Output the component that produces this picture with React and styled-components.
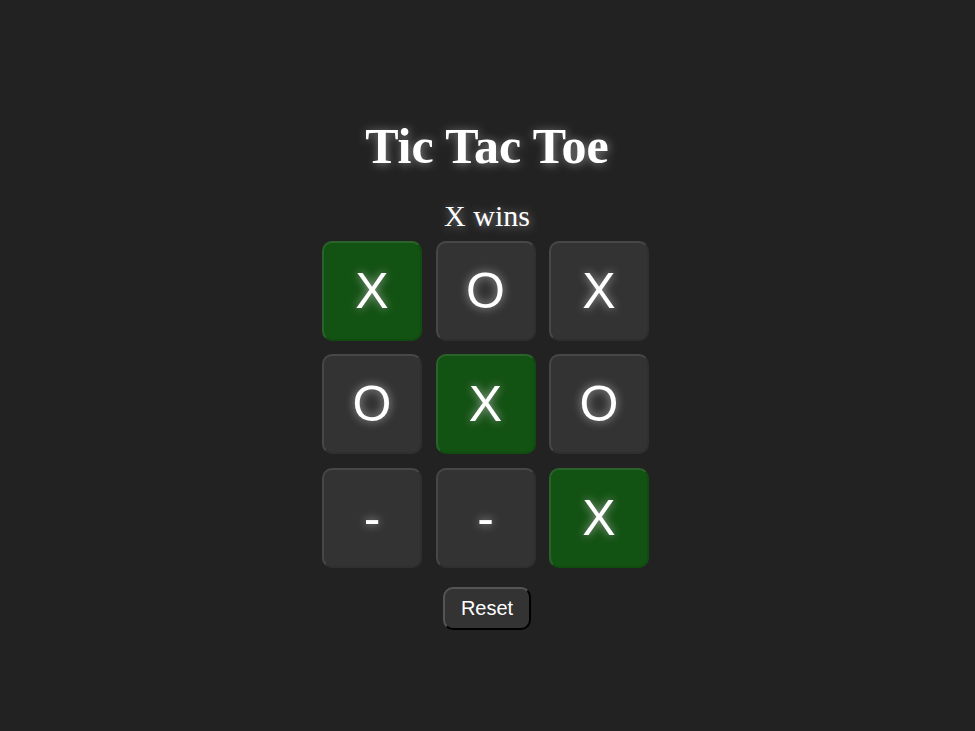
import React, { useState } from "react";
import styled, { createGlobalStyle } from "styled-components";

const GlobalStyle = createGlobalStyle`
  body {
    margin: 0;
    background: #222;
    color: #fff;
    font-family: "Liberation Serif", "Times New Roman", serif;
  }
`;

const Page = styled.main`
  min-height: 100vh;
  box-sizing: border-box;
  padding: 15px 1px 0 0;
  display: flex;
  flex-direction: column;
  align-items: center;
  justify-content: center;
`;

const Title = styled.h1`
  margin: 0 0 24px;
  font-size: 50px;
  line-height: 58px;
  text-shadow: 1px 1px 10px #888;
`;

const Status = styled.p`
  margin: 0 0 8px;
  font-size: 30px;
  line-height: 34px;
  text-shadow: 1px 1px 10px #888;
`;

const Board = styled.div`
  display: grid;
  grid-template-columns: repeat(3, 100px);
  grid-template-rows: repeat(3, 100px);
  place-content: space-between;
  width: 327px;
  height: 327px;
  margin-right: 3px;
`;

const Cell = styled.button`
  padding: 0;
  border: 2px solid;
  border-color: rgba(255, 255, 255, 0.1) rgba(0, 0, 0, 0.08) rgba(0, 0, 0, 0.08) rgba(255, 255, 255, 0.1);
  border-radius: 10px;
  background: ${({ $winning }) => ($winning ? "#125212" : "#333")};
  color: #fff;
  font-family: "Liberation Sans", Arial, sans-serif;
  font-size: 50px;
  text-shadow: 0 0 10px #aaa;
`;

const Reset = styled.button`
  margin-top: 19px;
  padding: 8px 16px;
  border: 2px outset #000;
  border-radius: 10px;
  background: #333;
  color: #fff;
  font-family: "Liberation Sans", Arial, sans-serif;
  font-size: 20px;
  line-height: 23px;
`;

const LINES = [
  [0, 1, 2], [3, 4, 5], [6, 7, 8],
  [0, 3, 6], [1, 4, 7], [2, 5, 8],
  [0, 4, 8], [2, 4, 6],
];

const START = ["X", "O", "X", "O", "X", "O", "-", "-", "X"];

export default function App() {
  const [cells, setCells] = useState(START);
  const line = LINES.find(
    ([a, b, c]) => cells[a] !== "-" && cells[a] === cells[b] && cells[b] === cells[c]
  );
  const moves = cells.filter((mark) => mark !== "-").length;
  const next = moves % 2 === 0 ? "X" : "O";
  const status = line ? `${cells[line[0]]} wins` : moves === 9 ? "Draw" : `${next}'s turn`;

  const play = (index) => {
    if (line || cells[index] !== "-") return;
    setCells(cells.map((mark, i) => (i === index ? next : mark)));
  };

  return (
    <>
      <GlobalStyle />
      <Page>
        <Title>Tic Tac Toe</Title>
        <Status>{status}</Status>
        <Board>
          {cells.map((mark, i) => (
            <Cell key={i} type="button" $winning={line?.includes(i)} onClick={() => play(i)}>
              {mark}
            </Cell>
          ))}
        </Board>
        <Reset type="button" onClick={() => setCells(Array(9).fill("-"))}>Reset</Reset>
      </Page>
    </>
  );
}
